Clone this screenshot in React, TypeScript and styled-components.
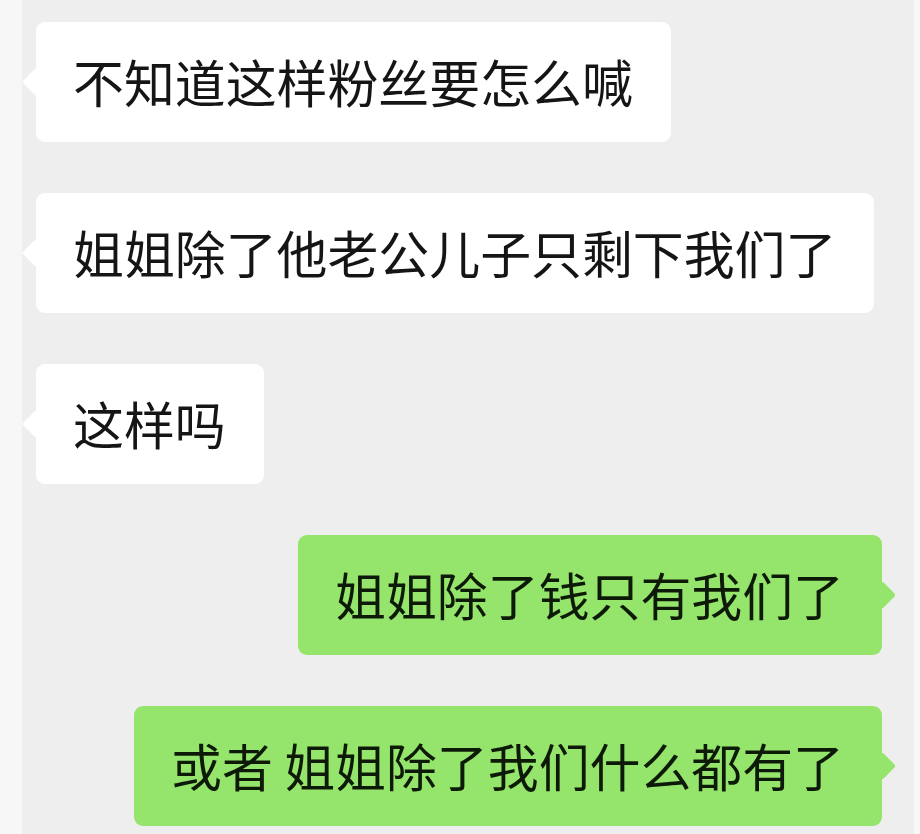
import React from 'react';
import styled, { createGlobalStyle } from 'styled-components';

const GlobalStyle = createGlobalStyle`
  html, body {
    margin: 0;
    padding: 0;
    background: #eeeeee;
  }
  body {
    font-family: "Noto Sans CJK SC", "Noto Sans", sans-serif;
  }
`

type Side = 'left' | 'right';

interface Message {
  id: number;
  side: Side;
  text: string;
}

const messages: Message[] = [
  { id: 1, side: 'left', text: '不知道这样粉丝要怎么喊' },
  { id: 2, side: 'left', text: '姐姐除了他老公儿子只剩下我们了' },
  { id: 3, side: 'left', text: '这样吗' },
  { id: 4, side: 'right', text: '姐姐除了钱只有我们了' },
  { id: 5, side: 'right', text: '或者 姐姐除了我们什么都有了' },
];

const App: React.FC = () => {
  return (
    <>
      <GlobalStyle />
      <Page>
        <Gutter />
        <ChatList>
          {messages.map(msg => (
            <Row key={msg.id} side={msg.side}>
              <Bubble side={msg.side}>{msg.text}</Bubble>
            </Row>
          ))}
        </ChatList>
        <Gutter />
      </Page>
    </>
  );
}

export default App;

const Page = styled.div`
  display: grid;
  grid-template-columns: 22px 1fr 6px;
  min-height: 834px;
  background: #eeeeee;
`
const Gutter = styled.div`
  background: #f7f7f7;
`
const ChatList = styled.div`
  display: flex;
  flex-direction: column;
  gap: 51px;
  padding: 22px 0 0;
`
const Row = styled.div<{ side: Side }>`
  display: flex;
  justify-content: ${p => (p.side === 'left' ? 'flex-start' : 'flex-end')};
  padding-left: ${p => (p.side === 'left' ? '14px' : '0')};
  padding-right: ${p => (p.side === 'right' ? '32px' : '0')};
`
const Bubble = styled.div<{ side: Side }>`
  position: relative;
  box-sizing: border-box;
  height: 120px;
  padding: 29px 38px 31px 37px;
  border-radius: 9px;
  font-size: 50.9px;
  line-height: 60px;
  white-space: nowrap;
  color: ${p => (p.side === 'left' ? '#151515' : '#0d1a08')};
  background: ${p => (p.side === 'left' ? '#ffffff' : '#95e46b')};

  &::before {
    content: '';
    position: absolute;
    top: 50%;
    ${p => (p.side === 'left' ? 'left: 0;' : 'right: 0;')}
    width: 20px;
    height: 20px;
    background: inherit;
    border-radius: 3px;
    transform: translate(${p => (p.side === 'left' ? '-50%' : '50%')}, -50%) rotate(45deg);
  }
`
